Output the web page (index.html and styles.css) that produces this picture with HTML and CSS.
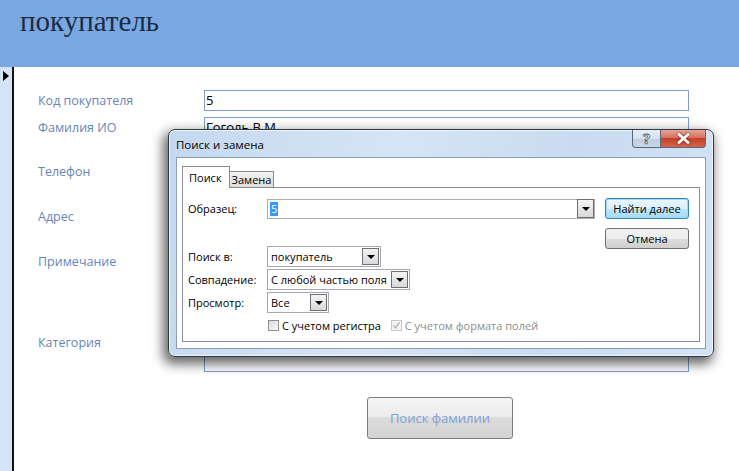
FILE: index.html
```html
<!DOCTYPE html>
<html lang="ru">
<head>
<meta charset="utf-8">
<link rel="stylesheet" href="styles.css">
</head>
<body>
<div class="page">
  <header class="header"><h1 class="title">покупатель</h1></header>
  <div class="body">
    <div class="selector"><span class="sel-arrow"></span></div>
    <main class="form">
      <div class="fields">
        <div class="label">Код покупателя</div><div class="box r1">5</div>
        <div class="label">Фамилия ИО</div><div class="box r2">Гоголь В.М.</div>
        <div class="label">Телефон</div><div class="box r3"></div>
        <div class="label">Адрес</div><div class="box r4"></div>
        <div class="label">Примечание</div><div class="box r5"></div>
        <div class="label">Категория</div><div class="box r6"></div>
      </div>
      <div class="btn-row"><button class="search-btn">Поиск фамилии</button></div>
    </main>
  </div>

  <div class="dialog">
    <div class="titlebar">
      <span class="dlg-title">Поиск и замена</span>
      <div class="caption">
        <span class="cap help">?</span>
        <span class="cap close"><svg width="13" height="11" viewBox="0 0 13 11"><path d="M2 1.5 L11 9.5 M11 1.5 L2 9.5" stroke="#fff" stroke-width="2.6" stroke-linecap="square"/><path d="M2 1.5 L11 9.5 M11 1.5 L2 9.5" stroke="#fff" stroke-width="2"/></svg></span>
      </div>
    </div>
    <div class="client">
      <div class="tabs">
        <span class="tab active">Поиск</span>
        <span class="tab">Замена</span>
      </div>
      <div class="panel">
        <div class="left">
          <div class="row first">
            <span class="dl">Образец:</span>
            <span class="combo w-long"><span class="sel">5</span><span class="dd"><i></i></span></span>
          </div>
          <div class="row gap-big">
            <span class="dl">Поиск в:</span>
            <span class="combo w-a"><span>покупатель</span><span class="dd"><i></i></span></span>
          </div>
          <div class="row">
            <span class="dl">Совпадение:</span>
            <span class="combo w-b"><span>С любой частью поля</span><span class="dd"><i></i></span></span>
          </div>
          <div class="row">
            <span class="dl">Просмотр:</span>
            <span class="combo w-c"><span>Все</span><span class="dd"><i></i></span></span>
          </div>
          <div class="checks">
            <label class="chk"><span class="cbox"></span>С учетом регистра</label>
            <label class="chk disabled"><span class="cbox"><svg width="9" height="9" viewBox="0 0 9 9"><path d="M1.5 4.5 L3.5 7 L7.5 1.5" fill="none" stroke="#b5b5b5" stroke-width="1.3"/></svg></span>С учетом формата полей</label>
          </div>
        </div>
        <div class="right">
          <button class="wbtn default">Найти далее</button>
          <button class="wbtn">Отмена</button>
        </div>
      </div>
    </div>
  </div>
</div>
</body>
</html>
```

FILE: styles.css
```css
* { box-sizing: border-box; }
html, body { margin: 0; padding: 0; }
body {
  width: 739px;
  height: 471px;
  overflow: hidden;
  background: #fff;
  font-family: "Open Sans", "Noto Sans", sans-serif;
}
.page { position: relative; width: 739px; height: 471px; display: flex; flex-direction: column; }

.header {
  height: 67px;
  background: #79a8e1;
  padding: 5px 0 0 20px;
}
.title {
  margin: 0;
  font-family: "Liberation Serif", "DejaVu Serif", serif;
  font-weight: normal;
  font-size: 29px;
  color: #1c2b45;
}

.body { flex: 1; display: flex; }
.selector {
  width: 14px;
  background: #d5e4f4;
  border-right: 2px solid #111;
  padding: 4px 0 0 3px;
}
.sel-arrow {
  display: block;
  width: 0; height: 0;
  border-top: 5px solid transparent;
  border-bottom: 5px solid transparent;
  border-left: 6px solid #000;
}

.form { flex: 1; padding: 23px 0 0 24px; }
.fields {
  display: grid;
  grid-template-columns: 166px 485px;
  grid-template-rows: 27px 44px 45px 45px 81px 40px;
}
.label {
  font-size: 12.5px;
  color: #6586b6;
  line-height: 21px;
}
.box {
  border: 1px solid #7f9dca;
  height: 21px;
  font-size: 13px;
  line-height: 19px;
  padding-left: 1px;
  color: #000;
}
.r5 { height: 70px; }
.r6 { height: 40px; }

.btn-row { padding: 25px 0 0 329px; }
.search-btn {
  width: 146px;
  height: 42px;
  border: 1px solid #7b7b7b;
  border-radius: 3px;
  background: linear-gradient(#f4f4f4 0%, #ececec 45%, #dcdcdc 50%, #d3d3d3 100%);
  color: #7ea2d7;
  font-family: "Open Sans", "Noto Sans", sans-serif;
  font-size: 13px;
  padding: 0;
}

/* dialog */
.dialog {
  position: absolute;
  left: 168px;
  top: 129px;
  width: 546px;
  height: 228px;
  border: 1px solid #2e3640;
  border-radius: 7px;
  background: linear-gradient(100deg, #c4d8ef 0%, #d6e5f5 40%, #c8dbf0 70%, #d3e3f5 100%);
  box-shadow: -3px 5px 12px 2px rgba(0,0,0,0.6), inset 0 0 0 1px rgba(255,255,255,0.7);
  display: flex;
  flex-direction: column;
  padding: 0 7px 7px 7px;
  font-family: "Open Sans", "Noto Sans", sans-serif;
  font-size: 11px;
  color: #000;
}
.titlebar {
  height: 27px;
  display: flex;
  justify-content: space-between;
  align-items: flex-start;
}
.dlg-title {
  font-size: 11.5px;
  padding-top: 7px;
}
.caption { display: flex; margin-right: 0; }
.cap {
  height: 18px;
  display: flex;
  align-items: center;
  justify-content: center;
  border: 1px solid #5d6874;
  border-top: none;
}
.help {
  width: 28px;
  border-radius: 0 0 0 4px;
  border-right: none;
  background: linear-gradient(#e6eef8 0%, #d4e0ee 50%, #bfcedf 51%, #c9d8e8 100%);
  color: #fff;
  font-size: 14px;
  font-weight: bold;
  -webkit-text-stroke: 0.8px #4b5b70;
}
.close {
  width: 46px;
  border-radius: 0 0 4px 0;
  background: linear-gradient(#e7a597 0%, #d6715f 45%, #c2412a 50%, #d4644c 100%);
}
.close svg { filter: drop-shadow(0 0 1px #6d1c10); }

.client {
  flex: 1;
  background: #fff;
  border: 1px solid #8c9db5;
  padding: 8px 5px 6px 5px;
  display: flex;
  flex-direction: column;
}
.tabs { display: flex; align-items: flex-end; height: 21px; position: relative; z-index: 1; }
.tab {
  height: 16px;
  border: 1px solid #898c95;
  border-bottom: none;
  background: linear-gradient(#f3f3f3, #dcdcdc);
  padding: 0 2px 0 2px;
  font-size: 11px;
  line-height: 15px;
  margin-left: -1px;
}
.tab.active {
  background: #fff;
  margin-left: 0;
  padding: 3px 7px 0 6px;
  margin-bottom: -1px;
  height: 22px;
}
.panel {
  flex: 1;
  border: 1px solid #898c95;
  display: flex;
  justify-content: space-between;
}
.left { padding: 10px 0 0 5px; }
.row { display: flex; align-items: center; height: 21px; margin-bottom: 2px; }
.row.first { margin-bottom: 0; }
.row.gap-big { margin-top: 27px; }
.row:nth-child(4) { margin-top: 2px; }
.dl { width: 79px; font-size: 11px; }
.combo {
  height: 21px;
  border: 1px solid #a5a8ae;
  display: flex;
  align-items: center;
  justify-content: space-between;
  padding: 1px 1px 1px 3px;
  font-size: 11px;
}
.w-long { width: 328px; height: 20px; padding: 0 0 0 2px; border-color: #abadb3; }
.w-a { width: 114px; }
.w-b { width: 143px; }
.w-c { width: 62px; }
.sel { background: #3399ff; color: #fff; padding: 0 1px; line-height: 14px; }
.dd {
  width: 17px;
  height: 17px;
  border: 1px solid #6f6f6f;
  background: linear-gradient(#f4f4f4, #d8d8d8);
  display: flex;
  align-items: center;
  justify-content: center;
}
.w-long .dd { height: 19px; width: 17px; border-color: #707070; }
.dd i {
  width: 0; height: 0;
  border-left: 4px solid transparent;
  border-right: 4px solid transparent;
  border-top: 4px solid #000;
  margin-top: 1px;
}
.checks { display: flex; padding: 3px 0 0 80px; gap: 10px; }
.chk { display: flex; align-items: center; font-size: 11px; color: #000; }
.chk.disabled { color: #8d8d8d; }
.cbox {
  width: 11px; height: 11px;
  border: 1px solid #8f8f8f;
  background: linear-gradient(135deg, #dcdcdc, #f8f8f8);
  margin-right: 3px;
  display: flex; align-items: center; justify-content: center;
}
.chk.disabled .cbox { border-color: #c8c8c8; background: #f4f4f4; }

.right { display: flex; flex-direction: column; gap: 9px; padding: 10px 10px 0 0; }
.wbtn {
  width: 84px;
  height: 21px;
  border: 1px solid #707070;
  border-radius: 3px;
  background: linear-gradient(#f2f2f2 0%, #ebebeb 50%, #dddddd 51%, #cfcfcf 100%);
  font-family: "Open Sans", "Noto Sans", sans-serif;
  font-size: 11px;
  padding: 0;
  color: #000;
}
.wbtn.default {
  border-color: #3c7fb1;
  box-shadow: inset 0 0 0 1px #9fdcf6;
  background: linear-gradient(#eaf6fd 0%, #d9f0fc 50%, #bee6fd 51%, #a7d9f5 100%);
}
```
